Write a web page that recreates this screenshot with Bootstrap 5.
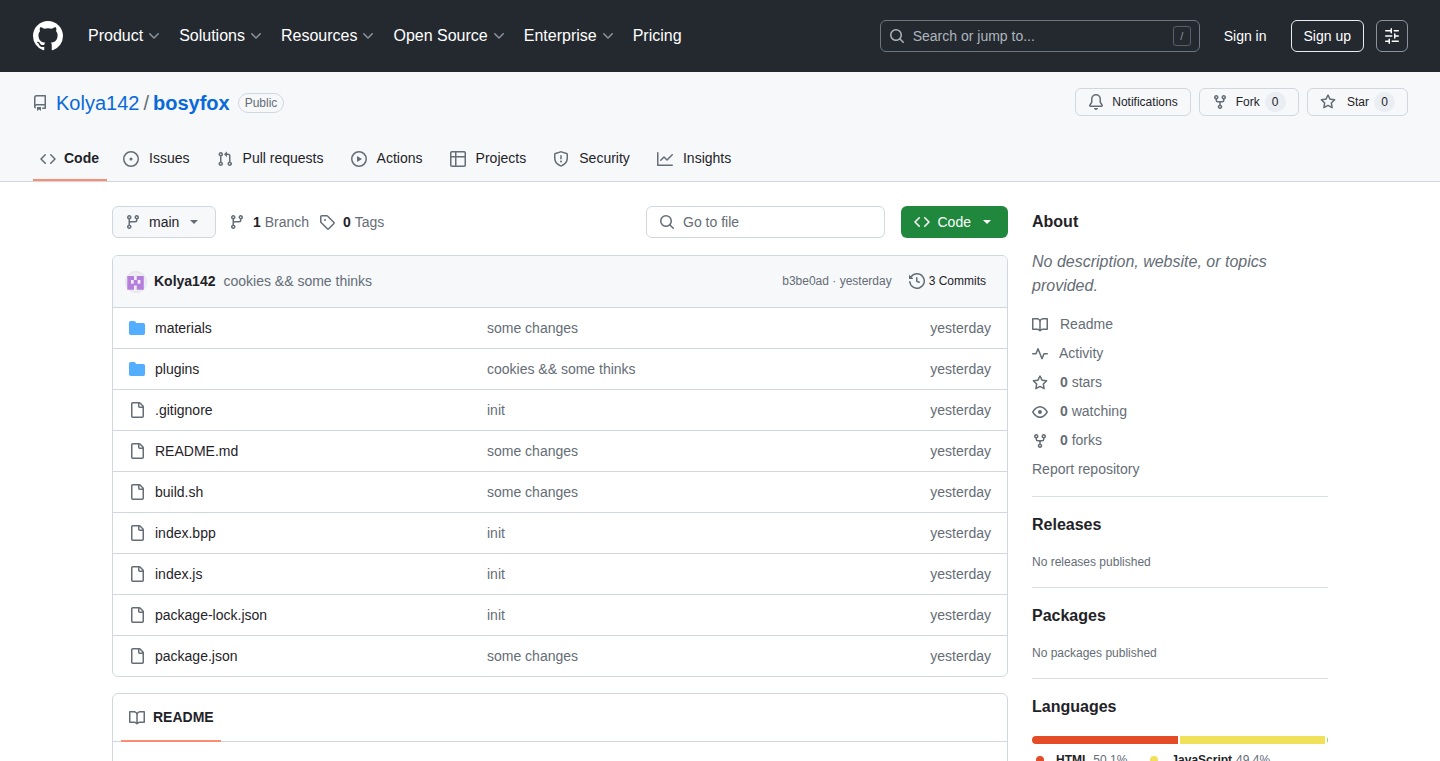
<!DOCTYPE html>
<html lang="en"><head><meta charset="utf-8"><title>bosyfox</title>
<link href="https://cdn.jsdelivr.net/npm/bootstrap@5.3.0/dist/css/bootstrap.min.css" rel="stylesheet">
<style>
html,body{height:761px;overflow:hidden}
body{font-family:"Liberation Sans",Arial,sans-serif;font-size:14px;color:#1f2328;background:#fff}
a{color:inherit;text-decoration:none}
.oi{width:16px;height:16px;fill:currentColor;flex:none;display:block}
.ghead{height:72px;background:#24292f;padding:0 32px;color:#fff}
.gmark{width:30px;height:30px;margin:0 25px 0 1px}
.gnav{gap:17px;font-size:16px}
.gnav .oi{margin-left:3px;color:#8b949e}
.gsearch{width:320px;height:32px;border:1px solid #6e7681;border-radius:6px;color:#adb5bd;padding:0 8px;margin-right:24px}
.gsearch .slash{width:18px;height:20px;border:1px solid #57606a;border-radius:3px;font-size:11px;color:#8b949e}
.gsignup{height:32px;border:1px solid #e6edf3;border-radius:6px;padding:0 12px;color:#fff;font-size:14px;line-height:30px;margin-left:24px;margin-right:12px}
.gslide{width:32px;height:32px;border:1px solid #8b949e;border-radius:6px}
.rhead{height:110px;background:#f6f8fa;border-bottom:1px solid #d0d7de;padding:16px 32px 0}
.rtitle{font-size:20px;color:#0969da;height:29px;padding-top:1px}
.rtitle .oi{color:#656d76;margin-right:8px}
.rsep{color:#656d76;margin:0 4px}
.pubtag{font-size:12px;color:#656d76;border:1px solid #d0d7de;border-radius:2em;padding:0 6px;line-height:18px;margin-left:8px}
.smbtn{height:28px;border:1px solid #d0d7de;border-radius:6px;background:#f6f8fa;font-size:12px;color:#1f2328;padding:0 12px}
.smbtn .oi{color:#656d76}
.cnt{background:#eaeef2;border-radius:2em;min-width:21px;line-height:20px;text-align:center;font-size:12px;color:#1f2328;padding:0 6px;margin-left:-3px}
.rtabs{margin-top:25px;height:40px;gap:8px}
.rtab{height:33px;padding:0 11.1px 0 8px;gap:10px;color:#1f2328;position:relative}
.rtab .oi{color:#656d76}
.rtab.on{font-weight:700;gap:8px;padding:0 8px}
.rtab.on:after{content:"";position:absolute;left:1px;right:0;bottom:-6px;height:2px;background:#fd8c73}
.mainw{width:1216px;margin:24px auto 0;gap:24px}
.mcol{width:896px;flex:none}
.scol{width:296px;flex:none}
.brbtn{height:32px;width:104px;border:1px solid #d0d7de;border-radius:6px;background:#f6f8fa;padding:0 12px}
.brbtn .oi,.mut .oi{color:#656d76}
.brbtn .caret{color:#656d76;margin-left:11px}
.caret{width:0;height:0;border-left:4px solid transparent;border-right:4px solid transparent;border-top:4px solid currentColor}
.mut{color:#656d76}
.strong{color:#1f2328}
.stat1{margin-left:13px}
.stat2{margin-left:10px}
.gofile{width:239px;height:32px;border:1px solid #d0d7de;border-radius:6px;padding:0 12px;color:#656d76}
.codebtn{width:107px;height:32px;background:#1f883d;border-radius:6px;color:#fff;font-weight:500;padding:0 12.5px}
.codebtn .caret{margin-left:4px}
.filebox{border:1px solid #d0d7de;border-radius:6px;margin-top:17px;overflow:hidden}
.fhead{height:52px;background:#f6f8fa;border-bottom:1px solid #d0d7de;padding:0 21px 0 12px}
.avat{width:22px;height:22px;flex:none;margin-right:7px}
.cmeta{font-size:12px;padding-bottom:2px}
.chist{margin-left:17px}
.chist .oi{color:#656d76}
.frow{height:41px;border-bottom:1px solid #d0d7de;padding:0 16px}
.frow:last-child{border-bottom:0;height:40px}
.fname{width:342px;padding-left:10px}
.fmsg{color:#656d76}
.ftime{margin-left:auto;color:#656d76}
.dirc{color:#54aeff}
.rdbox{border:1px solid #d0d7de;border-radius:6px 6px 0 0;margin-top:16px;height:200px}
.rdhead{height:48px;border-bottom:1px solid #d0d7de;padding:0 16px;position:relative;font-weight:700}
.rdhead .oi{color:#656d76}
.rdhead:after{content:"";position:absolute;left:8px;width:100px;bottom:-1px;height:2px;background:#fd8c73}
.scol h2{font-size:16px;font-weight:700;line-height:24px;margin:0}
.desc{font-size:16px;font-style:italic;line-height:24px;color:#656d76;margin:16px 0 0}
.slist{margin-top:12px}
.slink{height:29px;color:#656d76;gap:12px}
.slink.tight{gap:11px}
.slink .oi{color:#656d76}
.srule{border:0;border-top:1px solid #d8dee4;opacity:1;margin:12px 0 16px}
.srule.gap2{margin-top:16px}
.ssub{font-size:12px;color:#656d76;line-height:18px;margin-top:16px}
.langbar{height:8px;border-radius:6px;overflow:hidden;gap:2px;margin-top:17px}
.lang{font-size:12px;line-height:18px;margin-top:7px;padding-left:4px}
.ldot{width:8px;height:8px;border-radius:50%;flex:none}
.lhtml{background:#e34c26}
.ljs{background:#f1e05a}
.lsh{background:#89e051}
.lname{font-weight:700;margin-left:12px;margin-right:4px}
.lname.js{margin-left:13px}
.lpc{color:#656d76;margin-right:23px}
</style></head><body>
<svg width="0" height="0" class="position-absolute"><defs>
<symbol id="i-mark" viewBox="0 0 16 16"><path d="M8 0c4.42 0 8 3.58 8 8a8.013 8.013 0 0 1-5.45 7.59c-.4.08-.55-.17-.55-.38 0-.27.01-1.13.01-2.2 0-.75-.25-1.23-.54-1.48 1.78-.2 3.65-.88 3.65-3.95 0-.88-.31-1.59-.82-2.15.08-.2.36-1.02-.08-2.12 0 0-.67-.22-2.2.82-.64-.18-1.32-.27-2-.27-.68 0-1.36.09-2 .27-1.53-1.03-2.2-.82-2.2-.82-.44 1.1-.16 1.92-.08 2.12-.51.56-.82 1.28-.82 2.15 0 3.06 1.86 3.75 3.64 3.95-.23.2-.44.55-.51 1.07-.46.21-1.61.55-2.33-.66-.15-.24-.6-.83-1.23-.82-.67.01-.27.38.01.53.34.19.73.9.82 1.13.16.45.68 1.31 2.69.94 0 .67.01 1.3.01 1.49 0 .21-.15.45-.55.38A7.995 7.995 0 0 1 0 8c0-4.42 3.58-8 8-8Z"/></symbol>
<symbol id="i-chev" viewBox="0 0 16 16"><path d="M12.78 5.22a.749.749 0 0 1 0 1.06l-4.25 4.25a.749.749 0 0 1-1.06 0L3.22 6.28a.749.749 0 1 1 1.06-1.06L8 8.939l3.72-3.719a.749.749 0 0 1 1.06 0Z"/></symbol>
<symbol id="i-search" viewBox="0 0 16 16"><path d="M10.68 11.74a6 6 0 0 1-7.922-8.982 6 6 0 0 1 8.982 7.922l3.04 3.04a.749.749 0 0 1-.326 1.275.749.749 0 0 1-.734-.215ZM11.5 7a4.499 4.499 0 1 0-8.997 0A4.499 4.499 0 0 0 11.5 7Z"/></symbol>
<symbol id="i-sliders" viewBox="0 0 16 16"><path d="M15 2.75a.75.75 0 0 1-.75.75h-4a.75.75 0 0 1 0-1.5h4a.75.75 0 0 1 .75.75Zm-8.5.75v1.25a.75.75 0 0 0 1.5 0v-4a.75.75 0 0 0-1.5 0V2H1.75a.75.75 0 0 0 0 1.5H6.5Zm1.25 5.25a.75.75 0 0 0 0-1.5h-6a.75.75 0 0 0 0 1.5h6ZM15 8a.75.75 0 0 1-.75.75H11.5V10a.75.75 0 1 1-1.5 0V6a.75.75 0 0 1 1.5 0v1.25h2.75A.75.75 0 0 1 15 8Zm-9 5.25v-2a.75.75 0 0 0-1.5 0v1.25H1.75a.75.75 0 0 0 0 1.5H4.5v1.25a.75.75 0 0 0 1.5 0v-2Zm9 0a.75.75 0 0 1-.75.75h-6a.75.75 0 0 1 0-1.5h6a.75.75 0 0 1 .75.75Z"/></symbol>
<symbol id="i-repo" viewBox="0 0 16 16"><path d="M2 2.5A2.5 2.5 0 0 1 4.5 0h8.75a.75.75 0 0 1 .75.75v12.5a.75.75 0 0 1-.75.75h-2.5a.75.75 0 0 1 0-1.5h1.75v-2h-8a1 1 0 0 0-.714 1.7.75.75 0 1 1-1.072 1.05A2.495 2.495 0 0 1 2 11.5Zm10.5-1h-8a1 1 0 0 0-1 1v6.708A2.486 2.486 0 0 1 4.5 9h8ZM5 12.25a.25.25 0 0 1 .25-.25h3.5a.25.25 0 0 1 .25.25v3.25a.25.25 0 0 1-.4.2l-1.45-1.087a.249.249 0 0 0-.3 0L5.4 15.7a.25.25 0 0 1-.4-.2Z"/></symbol>
<symbol id="i-bell" viewBox="0 0 16 16"><path d="M8 16a2 2 0 0 0 1.985-1.75c.017-.137-.097-.25-.235-.25h-3.5c-.138 0-.252.113-.235.25A2 2 0 0 0 8 16ZM3 5a5 5 0 0 1 10 0v2.947c0 .05.015.098.042.139l1.703 2.555A1.519 1.519 0 0 1 13.482 13H2.518a1.516 1.516 0 0 1-1.263-2.36l1.703-2.554A.255.255 0 0 0 3 7.947Zm5-3.5A3.5 3.5 0 0 0 4.5 5v2.947c0 .346-.102.683-.294.97l-1.703 2.556a.017.017 0 0 0-.003.01l.001.006c0 .002.002.004.004.006l.006.004.007.001h10.964l.007-.001.006-.004.004-.006.001-.007a.017.017 0 0 0-.003-.01l-1.703-2.554a1.745 1.745 0 0 1-.294-.97V5A3.5 3.5 0 0 0 8 1.5Z"/></symbol>
<symbol id="i-fork" viewBox="0 0 16 16"><path d="M5 5.372v.878c0 .414.336.75.75.75h4.5a.75.75 0 0 0 .75-.75v-.878a2.25 2.25 0 1 1 1.5 0v.878a2.25 2.25 0 0 1-2.25 2.25h-1.5v2.128a2.251 2.251 0 1 1-1.5 0V8.5h-1.5A2.25 2.25 0 0 1 3.5 6.25v-.878a2.25 2.25 0 1 1 1.5 0ZM5 3.25a.75.75 0 1 0-1.5 0 .75.75 0 0 0 1.5 0Zm6.75.75a.75.75 0 1 0 0-1.5.75.75 0 0 0 0 1.5Zm-3 8.75a.75.75 0 1 0-1.5 0 .75.75 0 0 0 1.5 0Z"/></symbol>
<symbol id="i-star" viewBox="0 0 16 16"><path d="M8 .25a.75.75 0 0 1 .673.418l1.882 3.815 4.21.612a.75.75 0 0 1 .416 1.279l-3.046 2.97.719 4.192a.751.751 0 0 1-1.088.791L8 12.347l-3.766 1.98a.75.75 0 0 1-1.088-.79l.72-4.194L.818 6.374a.75.75 0 0 1 .416-1.28l4.21-.611L7.327.668A.75.75 0 0 1 8 .25Zm0 2.445L6.615 5.5a.75.75 0 0 1-.564.41l-3.097.45 2.24 2.184a.75.75 0 0 1 .216.664l-.528 3.084 2.769-1.456a.75.75 0 0 1 .698 0l2.77 1.456-.53-3.084a.75.75 0 0 1 .216-.664l2.24-2.183-3.096-.45a.75.75 0 0 1-.564-.41L8 2.694Z"/></symbol>
<symbol id="i-code" viewBox="0 0 16 16"><path d="m11.28 3.22 4.25 4.25a.75.75 0 0 1 0 1.06l-4.25 4.25a.749.749 0 0 1-1.275-.326.749.749 0 0 1 .215-.734L13.94 8l-3.72-3.72a.749.749 0 0 1 .326-1.275.749.749 0 0 1 .734.215Zm-6.56 0a.751.751 0 0 1 1.042.018.751.751 0 0 1 .018 1.042L2.06 8l3.72 3.72a.749.749 0 0 1-.326 1.275.749.749 0 0 1-.734-.215L.47 8.53a.75.75 0 0 1 0-1.06Z"/></symbol>
<symbol id="i-issue" viewBox="0 0 16 16"><path d="M8 9.5a1.5 1.5 0 1 0 0-3 1.5 1.5 0 0 0 0 3Z"/><path d="M8 0a8 8 0 1 1 0 16A8 8 0 0 1 8 0ZM1.5 8a6.5 6.5 0 1 0 13 0 6.5 6.5 0 0 0-13 0Z"/></symbol>
<symbol id="i-pr" viewBox="0 0 16 16"><path d="M1.5 3.25a2.25 2.25 0 1 1 3 2.122v5.256a2.251 2.251 0 1 1-1.5 0V5.372A2.25 2.25 0 0 1 1.5 3.25Zm5.677-.177L9.573.677A.25.25 0 0 1 10 .854V2.5h1A2.5 2.5 0 0 1 13.5 5v5.628a2.251 2.251 0 1 1-1.5 0V5a1 1 0 0 0-1-1h-1v1.646a.25.25 0 0 1-.427.177L7.177 3.427a.25.25 0 0 1 0-.354ZM3.75 2.5a.75.75 0 1 0 0 1.5.75.75 0 0 0 0-1.5Zm0 9.5a.75.75 0 1 0 0 1.5.75.75 0 0 0 0-1.5Zm8.25.75a.75.75 0 1 0 1.5 0 .75.75 0 0 0-1.5 0Z"/></symbol>
<symbol id="i-play" viewBox="0 0 16 16"><path d="M8 0a8 8 0 1 1 0 16A8 8 0 0 1 8 0ZM1.5 8a6.5 6.5 0 1 0 13 0 6.5 6.5 0 0 0-13 0Zm4.879-2.773 4.264 2.559a.25.25 0 0 1 0 .428l-4.264 2.559A.25.25 0 0 1 6 10.559V5.442a.25.25 0 0 1 .379-.215Z"/></symbol>
<symbol id="i-table" viewBox="0 0 16 16"><path d="M0 1.75C0 .784.784 0 1.75 0h12.5C15.216 0 16 .784 16 1.75v12.5A1.75 1.75 0 0 1 14.25 16H1.75A1.75 1.75 0 0 1 0 14.25ZM6.5 6.5v8h7.75a.25.25 0 0 0 .25-.25V6.5Zm8-1.5V1.75a.25.25 0 0 0-.25-.25H6.5V5Zm-13 1.5v7.75c0 .138.112.25.25.25H5v-8ZM5 5V1.5H1.75a.25.25 0 0 0-.25.25V5Z"/></symbol>
<symbol id="i-shield" viewBox="0 0 16 16"><path d="M7.467.133a1.748 1.748 0 0 1 1.066 0l5.25 1.68A1.75 1.75 0 0 1 15 3.48V7c0 1.566-.32 3.182-1.303 4.682-.983 1.498-2.585 2.813-5.032 3.855a1.697 1.697 0 0 1-1.33 0c-2.447-1.042-4.049-2.357-5.032-3.855C1.32 10.182 1 8.566 1 7V3.48a1.75 1.75 0 0 1 1.217-1.667Zm.61 1.429a.25.25 0 0 0-.153 0l-5.25 1.68a.25.25 0 0 0-.174.238V7c0 1.358.275 2.666 1.057 3.86.784 1.194 2.121 2.34 4.366 3.297a.196.196 0 0 0 .154 0c2.245-.956 3.582-2.104 4.366-3.298C13.225 9.666 13.5 8.36 13.5 7V3.48a.251.251 0 0 0-.174-.237l-5.25-1.68ZM8.75 4.75v3a.75.75 0 0 1-1.5 0v-3a.75.75 0 0 1 1.5 0ZM9 10.5a1 1 0 1 1-2 0 1 1 0 0 1 2 0Z"/></symbol>
<symbol id="i-graph" viewBox="0 0 16 16"><path d="M1.5 1.75V13.5h13.75a.75.75 0 0 1 0 1.5H.75a.75.75 0 0 1-.75-.75V1.75a.75.75 0 0 1 1.5 0Zm14.28 2.53-5.25 5.25a.75.75 0 0 1-1.06 0L7 7.06 4.28 9.78a.751.751 0 0 1-1.042-.018.751.751 0 0 1-.018-1.042l3.25-3.25a.75.75 0 0 1 1.06 0L10 7.94l4.72-4.72a.751.751 0 0 1 1.042.018.751.751 0 0 1 .018 1.042Z"/></symbol>
<symbol id="i-branch" viewBox="0 0 16 16"><path d="M9.5 3.25a2.25 2.25 0 1 1 3 2.122V6A2.5 2.5 0 0 1 10 8.5H6a1 1 0 0 0-1 1v1.128a2.251 2.251 0 1 1-1.5 0V5.372a2.25 2.25 0 1 1 1.5 0v1.836A2.493 2.493 0 0 1 6 7h4a1 1 0 0 0 1-1v-.628A2.25 2.25 0 0 1 9.5 3.25Zm-6 0a.75.75 0 1 0 1.5 0 .75.75 0 0 0-1.5 0Zm8.25-.75a.75.75 0 1 0 0 1.5.75.75 0 0 0 0-1.5ZM4.25 12a.75.75 0 1 0 0 1.5.75.75 0 0 0 0-1.5Z"/></symbol>
<symbol id="i-tag" viewBox="0 0 16 16"><path d="M1 7.775V2.75C1 1.784 1.784 1 2.75 1h5.025c.464 0 .91.184 1.238.513l6.25 6.25a1.75 1.75 0 0 1 0 2.474l-5.026 5.026a1.75 1.75 0 0 1-2.474 0l-6.25-6.25A1.752 1.752 0 0 1 1 7.775Zm1.5 0c0 .066.026.13.073.177l6.25 6.25a.25.25 0 0 0 .354 0l5.025-5.025a.25.25 0 0 0 0-.354l-6.25-6.25a.25.25 0 0 0-.177-.073H2.75a.25.25 0 0 0-.25.25ZM6 5a1 1 0 1 1 0 2 1 1 0 0 1 0-2Z"/></symbol>
<symbol id="i-history" viewBox="0 0 16 16"><path d="m.427 1.927 1.215 1.215a8.002 8.002 0 1 1-1.6 5.685.75.75 0 1 1 1.493-.154 6.5 6.5 0 1 0 1.18-4.458l1.358 1.358A.25.25 0 0 1 3.896 6H.25A.25.25 0 0 1 0 5.75V2.104a.25.25 0 0 1 .427-.177ZM7.750 4a.75.75 0 0 1 .75.75v2.992l2.028.812a.75.75 0 0 1-.557 1.392l-2.5-1A.751.751 0 0 1 7 8.25v-3.5A.75.75 0 0 1 7.750 4Z"/></symbol>
<symbol id="i-dir" viewBox="0 0 16 16"><path d="M1.75 1A1.75 1.75 0 0 0 0 2.75v10.5C0 14.216.784 15 1.75 15h12.5A1.75 1.75 0 0 0 16 13.25v-8.5A1.75 1.75 0 0 0 14.25 3H7.500a.25.25 0 0 1-.2-.1l-.9-1.2C6.07 1.26 5.55 1 5 1H1.75Z"/></symbol>
<symbol id="i-file" viewBox="0 0 16 16"><path d="M2 1.75C2 .784 2.784 0 3.75 0h6.586c.464 0 .909.184 1.237.513l2.914 2.914c.329.328.513.773.513 1.237v9.586A1.75 1.75 0 0 1 13.25 16h-9.5A1.75 1.75 0 0 1 2 14.25Zm1.75-.25a.25.25 0 0 0-.25.25v12.5c0 .138.112.25.25.25h9.5a.25.25 0 0 0 .25-.25V6h-2.75A1.75 1.75 0 0 1 9 4.25V1.5Zm6.75.062V4.25c0 .138.112.25.25.25h2.688l-.011-.013-2.914-2.914-.013-.011Z"/></symbol>
<symbol id="i-book" viewBox="0 0 16 16"><path d="M0 1.75A.75.75 0 0 1 .75 1h4.253c1.227 0 2.317.59 3 1.501A3.743 3.743 0 0 1 11.006 1h4.245a.75.75 0 0 1 .75.75v10.500a.75.75 0 0 1-.75.75h-4.507a2.25 2.25 0 0 0-1.591.659l-.622.621a.75.75 0 0 1-1.06 0l-.622-.621A2.25 2.25 0 0 0 5.258 13H.75a.75.75 0 0 1-.75-.75Zm7.251 10.324.004-5.073-.002-2.253A2.25 2.25 0 0 0 5.003 2.5H1.5v9h3.757a3.75 3.75 0 0 1 1.994.574ZM8.755 4.75l-.004 7.322a3.752 3.752 0 0 1 1.992-.572H14.500v-9h-3.495a2.25 2.25 0 0 0-2.25 2.25Z"/></symbol>
<symbol id="i-pulse" viewBox="0 0 16 16"><path d="M6 2c.306 0 .582.187.696.471L10 10.731l1.304-3.26A.751.751 0 0 1 12 7h3.25a.75.75 0 0 1 0 1.5h-2.742l-1.812 4.528a.751.751 0 0 1-1.392 0L6 4.77 4.696 8.03A.75.75 0 0 1 4 8.5H.75a.75.75 0 0 1 0-1.5h2.742l1.812-4.529A.751.751 0 0 1 6 2Z"/></symbol>
<symbol id="i-eye" viewBox="0 0 16 16"><path d="M8 2c1.981 0 3.671.992 4.933 2.078 1.27 1.091 2.187 2.345 2.637 3.023a1.62 1.62 0 0 1 0 1.798c-.45.678-1.367 1.932-2.637 3.023C11.67 13.008 9.981 14 8 14c-1.981 0-3.671-.992-4.933-2.078C1.797 10.83.88 9.576.43 8.898a1.62 1.62 0 0 1 0-1.798c.45-.677 1.367-1.931 2.637-3.022C4.33 2.992 6.019 2 8 2ZM1.679 7.932a.12.12 0 0 0 0 .136c.411.622 1.241 1.75 2.366 2.717C5.176 11.758 6.527 12.5 8 12.5c1.473 0 2.825-.742 3.955-1.715 1.124-.967 1.954-2.096 2.366-2.717a.12.12 0 0 0 0-.136c-.412-.621-1.242-1.75-2.366-2.717C10.824 4.242 9.473 3.5 8 3.5c-1.473 0-2.825.742-3.955 1.715-1.124.967-1.954 2.096-2.366 2.717ZM8 10a2 2 0 1 1-.001-3.999A2 2 0 0 1 8 10Z"/></symbol>
</defs></svg>

<header class="ghead d-flex align-items-center">
  <svg class="oi gmark"><use href="#i-mark"/></svg>
  <nav class="gnav d-flex align-items-center">
    <a class="d-flex align-items-center" href="#">Product<svg class="oi"><use href="#i-chev"/></svg></a>
    <a class="d-flex align-items-center" href="#">Solutions<svg class="oi"><use href="#i-chev"/></svg></a>
    <a class="d-flex align-items-center" href="#">Resources<svg class="oi"><use href="#i-chev"/></svg></a>
    <a class="d-flex align-items-center" href="#">Open Source<svg class="oi"><use href="#i-chev"/></svg></a>
    <a class="d-flex align-items-center" href="#">Enterprise<svg class="oi"><use href="#i-chev"/></svg></a>
    <a href="#">Pricing</a>
  </nav>
  <div class="ms-auto d-flex align-items-center">
    <div class="gsearch d-flex align-items-center gap-2"><svg class="oi"><use href="#i-search"/></svg><span>Search or jump to...</span><span class="slash ms-auto d-flex align-items-center justify-content-center">/</span></div>
    <a href="#">Sign in</a>
    <a class="gsignup" href="#">Sign up</a>
    <span class="gslide d-flex align-items-center justify-content-center"><svg class="oi"><use href="#i-sliders"/></svg></span>
  </div>
</header>

<section class="rhead">
  <div class="d-flex align-items-start justify-content-between">
    <div class="rtitle d-flex align-items-center"><svg class="oi"><use href="#i-repo"/></svg><a href="#">Kolya142</a><span class="rsep">/</span><a class="fw-bold" href="#">bosyfox</a><span class="pubtag">Public</span></div>
    <div class="d-flex gap-2">
      <a class="smbtn d-flex align-items-center gap-2" href="#"><svg class="oi"><use href="#i-bell"/></svg>Notifications</a>
      <a class="smbtn d-flex align-items-center gap-2" href="#"><svg class="oi"><use href="#i-fork"/></svg>Fork<span class="cnt">0</span></a>
      <a class="smbtn d-flex align-items-center gap-2" href="#"><svg class="oi"><use href="#i-star"/></svg>&nbsp;Star<span class="cnt">0</span></a>
    </div>
  </div>
  <nav class="rtabs d-flex">
    <a class="rtab on d-flex align-items-center" href="#"><svg class="oi"><use href="#i-code"/></svg>Code</a>
    <a class="rtab d-flex align-items-center" href="#"><svg class="oi"><use href="#i-issue"/></svg>Issues</a>
    <a class="rtab d-flex align-items-center" href="#"><svg class="oi"><use href="#i-pr"/></svg>Pull requests</a>
    <a class="rtab d-flex align-items-center" href="#"><svg class="oi"><use href="#i-play"/></svg>Actions</a>
    <a class="rtab d-flex align-items-center" href="#"><svg class="oi"><use href="#i-table"/></svg>Projects</a>
    <a class="rtab d-flex align-items-center" href="#"><svg class="oi"><use href="#i-shield"/></svg>Security</a>
    <a class="rtab d-flex align-items-center" href="#"><svg class="oi"><use href="#i-graph"/></svg>Insights</a>
  </nav>
</section>

<main class="mainw d-flex">
  <div class="mcol">
    <div class="d-flex align-items-center">
      <a class="brbtn d-flex align-items-center" href="#"><svg class="oi"><use href="#i-branch"/></svg><span class="ms-2">main</span><span class="caret"></span></a>
      <a class="mut d-flex align-items-center stat1" href="#"><svg class="oi"><use href="#i-branch"/></svg><b class="strong ms-2">1</b>&nbsp;Branch</a>
      <a class="mut d-flex align-items-center stat2" href="#"><svg class="oi"><use href="#i-tag"/></svg><b class="strong ms-2">0</b>&nbsp;Tags</a>
      <div class="gofile d-flex align-items-center gap-2 ms-auto"><svg class="oi"><use href="#i-search"/></svg>Go to file</div>
      <a class="codebtn d-flex align-items-center gap-2 ms-3" href="#"><svg class="oi"><use href="#i-code"/></svg>Code<span class="caret"></span></a>
    </div>
    <div class="filebox">
      <div class="fhead d-flex align-items-center">
        <svg class="avat" viewBox="0 0 24 24"><circle cx="12" cy="12" r="11.500" fill="#eeeef1" stroke="#dfe3e8"/><path fill="#b57edc" fill-rule="evenodd" d="M2.500 5.500h7.300v4.300h3V5.500h7.700v15h-7.700v-4.700h-3v4.700H2.500zM6.500 9.800V14h3V9.800zM13.800 9.800V14h3V9.800z"/></svg>
        <a class="fw-bold" href="#">Kolya142</a>
        <span class="mut ms-2">cookies &amp;&amp; some thinks</span>
        <span class="mut ms-auto cmeta">b3be0ad · yesterday</span>
        <a class="d-flex align-items-center cmeta chist" href="#"><svg class="oi me-1"><use href="#i-history"/></svg>3 Commits</a>
      </div>
      <div class="frow d-flex align-items-center"><svg class="oi dirc"><use href="#i-dir"/></svg><a class="fname" href="#">materials</a><span class="fmsg">some changes</span><span class="ftime">yesterday</span></div>
      <div class="frow d-flex align-items-center"><svg class="oi dirc"><use href="#i-dir"/></svg><a class="fname" href="#">plugins</a><span class="fmsg">cookies &amp;&amp; some thinks</span><span class="ftime">yesterday</span></div>
      <div class="frow d-flex align-items-center"><svg class="oi mut"><use href="#i-file"/></svg><a class="fname" href="#">.gitignore</a><span class="fmsg">init</span><span class="ftime">yesterday</span></div>
      <div class="frow d-flex align-items-center"><svg class="oi mut"><use href="#i-file"/></svg><a class="fname" href="#">README.md</a><span class="fmsg">some changes</span><span class="ftime">yesterday</span></div>
      <div class="frow d-flex align-items-center"><svg class="oi mut"><use href="#i-file"/></svg><a class="fname" href="#">build.sh</a><span class="fmsg">some changes</span><span class="ftime">yesterday</span></div>
      <div class="frow d-flex align-items-center"><svg class="oi mut"><use href="#i-file"/></svg><a class="fname" href="#">index.bpp</a><span class="fmsg">init</span><span class="ftime">yesterday</span></div>
      <div class="frow d-flex align-items-center"><svg class="oi mut"><use href="#i-file"/></svg><a class="fname" href="#">index.js</a><span class="fmsg">init</span><span class="ftime">yesterday</span></div>
      <div class="frow d-flex align-items-center"><svg class="oi mut"><use href="#i-file"/></svg><a class="fname" href="#">package-lock.json</a><span class="fmsg">init</span><span class="ftime">yesterday</span></div>
      <div class="frow d-flex align-items-center"><svg class="oi mut"><use href="#i-file"/></svg><a class="fname" href="#">package.json</a><span class="fmsg">some changes</span><span class="ftime">yesterday</span></div>
    </div>
    <div class="rdbox"><div class="rdhead d-flex align-items-center gap-2"><svg class="oi"><use href="#i-book"/></svg>README</div></div>
  </div>
  <aside class="scol">
    <h2 class="mt-1">About</h2>
    <p class="desc">No description, website, or topics provided.</p>
    <div class="slist">
      <a class="slink d-flex align-items-center" href="#"><svg class="oi"><use href="#i-book"/></svg>Readme</a>
      <a class="slink tight d-flex align-items-center" href="#"><svg class="oi"><use href="#i-pulse"/></svg>Activity</a>
      <a class="slink d-flex align-items-center" href="#"><svg class="oi"><use href="#i-star"/></svg><span><b>0</b> stars</span></a>
      <a class="slink d-flex align-items-center" href="#"><svg class="oi"><use href="#i-eye"/></svg><span><b>0</b> watching</span></a>
      <a class="slink d-flex align-items-center" href="#"><svg class="oi"><use href="#i-fork"/></svg><span><b>0</b> forks</span></a>
      <a class="slink d-flex align-items-center" href="#">Report repository</a>
    </div>
    <hr class="srule">
    <h2>Releases</h2>
    <div class="ssub">No releases published</div>
    <hr class="srule gap2">
    <h2>Packages</h2>
    <div class="ssub">No packages published</div>
    <hr class="srule gap2">
    <h2>Languages</h2>
    <div class="langbar d-flex">
      <span class="lhtml" style="width:50.1%"></span><span class="ljs" style="width:49.4%"></span><span class="lsh" style="width:0.5%"></span>
    </div>
    <div class="lang d-flex align-items-center">
      <span class="ldot lhtml"></span><span class="lname">HTML</span><span class="lpc">50.1%</span>
      <span class="ldot ljs"></span><span class="lname js">JavaScript</span><span class="lpc">49.4%</span>
    </div>
  </aside>
</main>
</body></html>
